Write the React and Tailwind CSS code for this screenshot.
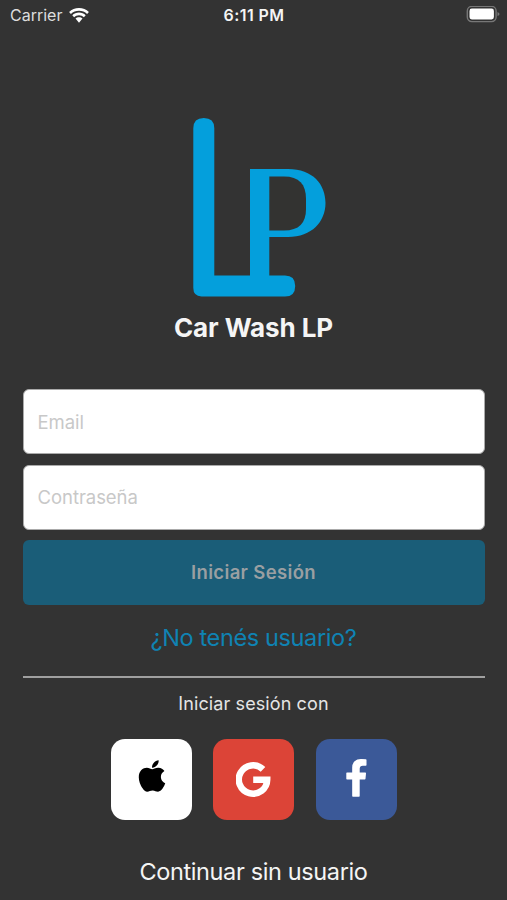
import { FaApple } from "react-icons/fa";

function WifiIcon() {
  return (
    <svg className="ml-[7px] h-[15px] w-5" viewBox="0 0 20 15" fill="#fff">
      <path d="M10 0C6.200 0 2.700 1.500.1 4L1.900 5.900C4 3.900 6.900 2.700 10 2.700S16 3.900 18.100 5.900L19.900 4C17.300 1.500 13.800 0 10 0Z" />
      <path d="M10 4.600C7.400 4.600 5.100 5.600 3.300 7.300L5.100 9.200C6.400 8 8.100 7.200 10 7.200S13.600 8 14.900 9.200L16.700 7.300C14.900 5.600 12.600 4.600 10 4.600Z" />
      <path d="M10 9.200C8.600 9.200 7.400 9.700 6.500 10.600L10 14.800L13.500 10.600C12.600 9.700 11.400 9.200 10 9.200Z" />
    </svg>
  );
}

function BatteryIcon() {
  return (
    <svg className="h-[18px] w-[34px]" viewBox="0 0 34 18" fill="none">
      <rect x="1.300" y="0.400" width="28.800" height="15.200" rx="4.500" stroke="#777" strokeWidth="1.400" />
      <rect x="3.500" y="2.600" width="24.400" height="10.800" rx="2.300" fill="#fff" />
      <path d="M31.500 5.900Q33.500 6.600 33.500 8Q33.500 9.400 31.500 10.100Z" fill="#777" />
    </svg>
  );
}

function Logo() {
  return (
    <svg className="h-[180px] w-[134px]" viewBox="0 0 134 180" fill="#049fdc">
      <path d="M1.300 11.300Q1.300 1 11.800 1Q22.300 1 22.300 11.300V158.500H58V52H96C121 52 133.500 67.500 133.500 86C133.500 104.500 120 120 96 120H77.300V158.500H93Q103.200 158.500 103.200 168.900Q103.200 179.500 93 179.500H9.500Q1.300 179 1.300 171Z" />
      <path d="M77.300 59.500V113.500H92C107 113.500 114 106 114 92V82C114 67 107 59.500 92 59.500Z" fill="#333331" />
    </svg>
  );
}

function GoogleIcon() {
  return (
    <svg className="h-[36px] w-[35px]" viewBox="0 0 35 36" fill="none" stroke="#fff" strokeWidth="6.500">
      <path d="M27 7.400A14.200 14.200 0 1 0 31.200 17.700H17.200" />
    </svg>
  );
}

function FacebookIcon() {
  return (
    <svg className="h-[38px] w-[21px]" viewBox="0 0 21 38" fill="#fff" stroke="#fff" strokeWidth="1.400" strokeLinejoin="round">
      <path d="M19.800 1V6H16.800C14 6 13 7.500 13 9.700V14.100H19.300L18.800 19.700H13V37H6.900V19.700H1V14.100H6.900V8.700C6.900 3.500 10 .8 15 .8C17 .8 19 .9 19.800 1Z" />
    </svg>
  );
}

function Field({ label, type }) {
  return (
    <input
      type={type}
      placeholder={label}
      aria-label={label}
      className="block h-[65px] w-full rounded-[6px] border border-[#aaa] bg-white px-[14px] text-[18.5px] tracking-[-0.05px] text-black outline-none placeholder:text-[#c8c8c8]"
    />
  );
}

export default function App() {
  return (
    <main className="flex h-[900px] w-[507px] flex-col overflow-hidden bg-[#333] font-['Inter',sans-serif] text-[#f5f5f5]">
      <header className="grid h-[30px] shrink-0 grid-cols-3 items-center pr-[7px] pl-[10px]">
        <div className="flex items-center text-[16px] text-[#ddd]">
          <span>Carrier</span>
          <WifiIcon />
        </div>
        <div className="pr-[2px] text-center text-[16px] font-semibold tracking-[0.4px] whitespace-nowrap">6:11 PM</div>
        <div className="flex justify-end"><BatteryIcon /></div>
      </header>

      <section className="mt-[87px] flex flex-col items-center">
        <div className="flex w-full pl-[192px]"><Logo /></div>
        <h1 className="mt-[12px] text-[26px] leading-[38px] font-bold tracking-[-0.1px]">Car Wash LP</h1>
      </section>

      <form className="mx-[22.500px] mt-[42px] flex flex-col gap-[10.500px]">
        <Field label="Email" type="email" />
        <Field label="Contraseña" type="password" />
        <button type="button" className="h-[65px] rounded-[6px] bg-[#1a5d78] text-[18.5px] font-semibold tracking-[0.35px] text-[#999fa2]">
          Iniciar Sesión
        </button>
      </form>

      <a className="mt-[16px] text-center text-[23.500px] leading-[34px] tracking-[-0.37px] text-[#0f83b3]">¿No tenés usuario?</a>
      <div className="mx-[22.500px] mt-[21px] h-[2px] shrink-0 bg-[#a0a0a0]" />
      <p className="mt-[13px] text-center text-[18px] leading-[26px] tracking-[0.1px] text-[#e5e5e5]">Iniciar sesión con</p>

      <div className="mt-[22px] flex justify-center gap-[21.500px]">
        <button aria-label="Apple" className="flex h-[81px] w-[81px] items-center justify-center rounded-[14px] bg-white pb-[7px] pl-[1px] text-black">
          <FaApple className="h-[36px] w-[36px]" />
        </button>
        <button aria-label="Google" className="flex h-[81px] w-[81px] items-center justify-center rounded-[14px] bg-[#dc4437] text-white">
          <GoogleIcon />
        </button>
        <button aria-label="Facebook" className="flex h-[81px] w-[81px] items-center justify-center rounded-[14px] bg-[#3b5998] pb-[3px]">
          <FacebookIcon />
        </button>
      </div>

      <a className="mt-[35px] text-center text-[23.500px] leading-[34px] tracking-[-0.37px]">Continuar sin usuario</a>
    </main>
  );
}
